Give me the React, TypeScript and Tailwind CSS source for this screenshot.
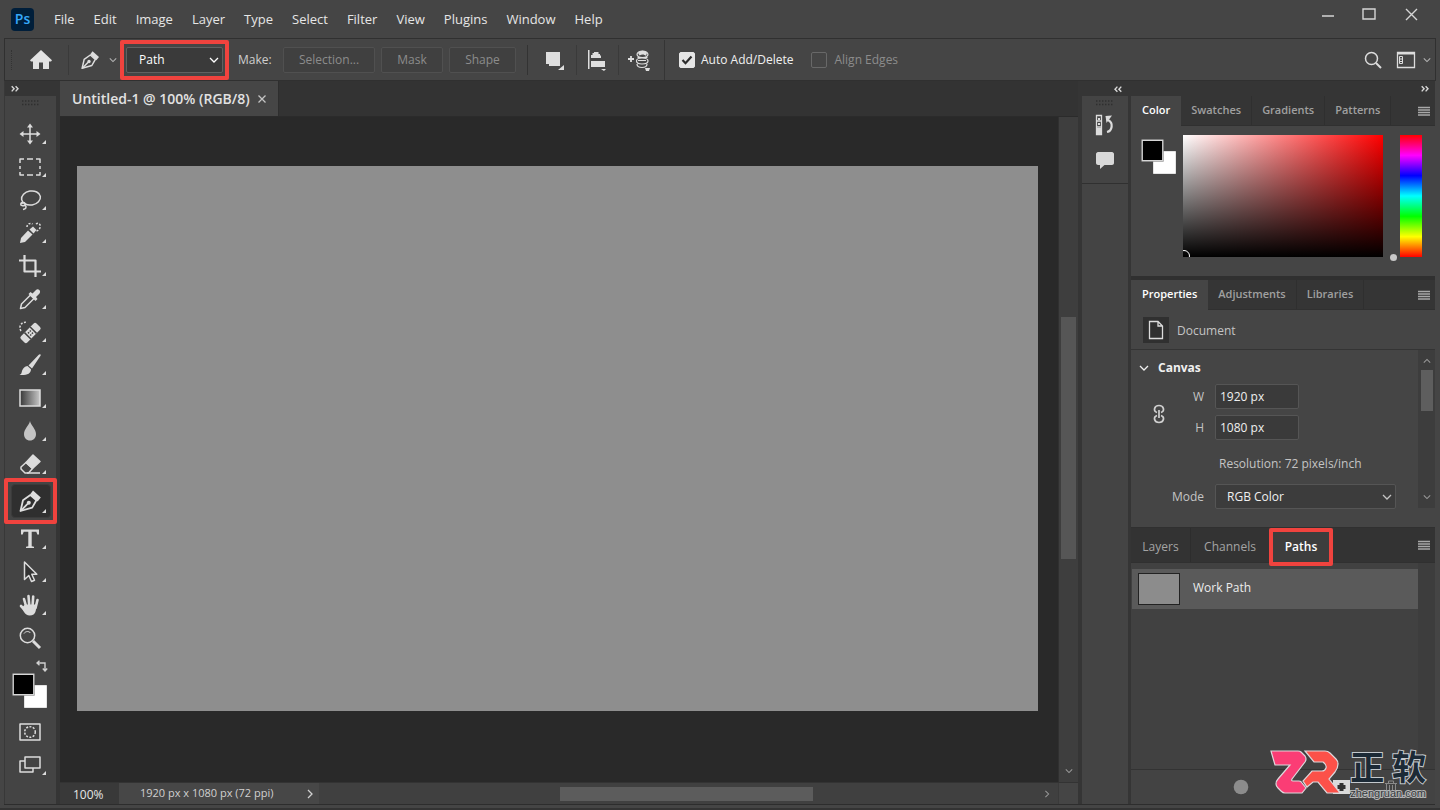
import { ReactNode } from "react";

interface ToolProps {
  name: string;
  children: ReactNode;
  corner?: boolean;
  className?: string;
}

interface TabsProps {
  tabs: string[];
  active: string;
}

const menus = [
  "File",
  "Edit",
  "Image",
  "Layer",
  "Type",
  "Select",
  "Filter",
  "View",
  "Plugins",
  "Window",
  "Help",
];

const Chevron = ({ className = "" }: { className?: string }) => (
  <svg
    className={className}
    width="10"
    height="10"
    viewBox="0 0 10 10"
    fill="none"
    stroke="currentColor"
    strokeWidth="1.3"
  >
    <path d="M1 3l4 4 4-4" />
  </svg>
);

const DoubleArrow = ({ className = "" }: { className?: string }) => (
  <svg
    className={className}
    width="8"
    height="8"
    viewBox="0 0 8 8"
    fill="none"
    stroke="#d8d8d8"
    strokeWidth="1.4"
  >
    <path d="M.7 1.2l2.4 2.6L.7 6.4M4.6 1.2L7 3.8 4.6 6.4" />
  </svg>
);

const Corner = ({ className = "right-[10px] bottom-[6px]" }: { className?: string }) => (
  <svg className={`absolute ${className}`} width="4" height="4" viewBox="0 0 4 4">
    <path d="M4 0v4H0z" fill="#dcdcdc" />
  </svg>
);

const Grip = () => (
  <svg width="18" height="6" viewBox="0 0 18 6">
    <path
      d="M0 1h18M0 4.5h18"
      stroke="#2f2f2f"
      strokeWidth="1.4"
      strokeDasharray="1.4 1.6"
    />
  </svg>
);

const Swatches = ({ className = "" }: { className?: string }) => (
  <svg className={className} width="36" height="36" viewBox="0 0 36 36">
    <path d="M12.5 12.5h22v22h-22z" fill="#fff" stroke="#e4e4e4" />
    <path d="M.5.5h22v22H.5z" fill="#2b2b2b" />
    <path d="M1.2 1.2h20.6v20.6H1.2z" fill="#000" stroke="#d6d6d6" strokeWidth="1.4" />
  </svg>
);

const PenIcon = ({ size = 24 }: { size?: number }) => (
  <svg width={size} height={size} viewBox="0 0 24 24">
    <g fill="none" stroke="#dedede" strokeWidth="1.8" strokeLinejoin="round">
      <path d="M2.5 22L5 11.2 12.4 6l6 5.2-4.2 7.4L2.5 22z" />
      <path d="M3 21.6l6.8-7" />
    </g>
    <circle cx="10.8" cy="13.8" r="2" fill="#dedede" />
    <path d="M12.4 5l2.6-3.5 7.8 6.9-3.2 4z" fill="#dedede" />
  </svg>
);

const Tool = ({ name, children, corner = true, className = "" }: ToolProps) => (
  <button
    type="button"
    aria-label={name}
    className={`relative flex h-[33px] w-full items-center justify-center pr-[2px] ${className}`}
  >
    {children}
    {corner && <Corner />}
  </button>
);

const Glyph = ({ children }: { children: ReactNode }) => (
  <svg
    width="24"
    height="24"
    viewBox="0 0 24 24"
    fill="none"
    stroke="#dcdcdc"
    strokeWidth="1.5"
    strokeLinejoin="round"
  >
    {children}
  </svg>
);

const Header = () => (
  <header className="flex h-[38px] shrink-0 items-center pr-[22px] pl-[11px]">
    <span className="flex h-[23px] w-[23px] items-center justify-center rounded bg-[#001e3a] text-sm font-semibold text-[#35a8fa]">
      Ps
    </span>
    <nav className="ml-5 flex flex-1 gap-[19px] pt-px text-[13px] text-[#e6e6e6]">
      {menus.map((menu) => (
        <button type="button" key={menu}>
          {menu}
        </button>
      ))}
    </nav>
    <div className="mb-[10px] flex items-center gap-[27px]">
      <button type="button" aria-label="Minimize">
        <svg width="12" height="14" viewBox="0 0 12 14">
          <path d="M0 9h12" stroke="#d5d5d5" strokeWidth="1.5" />
        </svg>
      </button>
      <button type="button" aria-label="Maximize">
        <svg width="16" height="14" viewBox="0 0 16 14" fill="none">
          <path d="M2 2h12v10H2z" stroke="#d5d5d5" strokeWidth="1.4" />
        </svg>
      </button>
      <button type="button" aria-label="Close">
        <svg width="14" height="14" viewBox="0 0 14 14">
          <path d="M2 2l11 11M13 2L2 13" stroke="#d5d5d5" strokeWidth="1.4" />
        </svg>
      </button>
    </div>
  </header>
);

const OptionsBar = () => {
  const makeButton =
    "h-[26px] rounded-xs border border-[#505050] bg-[#404040] text-[#8c8c8c]";
  return (
    <div className="mx-1 flex h-[43px] shrink-0 items-center border border-[#303030] text-xs">
      <span className="ml-[6px] h-5 w-px border-l border-dotted border-[#333]" />
      <button type="button" aria-label="Home" className="ml-[18px]">
        <svg width="22" height="20" viewBox="0 0 22 20" fill="#e2e2e2">
          <path d="M11 0L0 10.2l1 1.2h2V19h6v-6.500h4V19h6v-7.600h2l1-1.200z" />
        </svg>
      </button>
      <span className="mr-[11px] ml-4 h-[30px] w-px bg-[#3a3a3a]" />
      <button type="button" aria-label="Pen tool presets" className="flex items-center">
        <PenIcon size={20} />
        <Chevron className="ml-[9px] w-2 text-[#b5b5b5]" />
      </button>
      <div className="relative ml-[9px] w-[97px]">
        <select
          aria-label="Tool mode"
          className="h-[26px] w-full appearance-none rounded-xs border border-[#616161] bg-[#3a3a3a] pl-3 text-xs text-white"
        >
          <option>Path</option>
        </select>
        <Chevron className="pointer-events-none absolute top-2 right-1 text-white" />
        <span className="pointer-events-none absolute -inset-x-[6px] -inset-y-[7px] rounded-xs border-4 border-[#f0433e]" />
      </div>
      <span className="ml-[15px] w-[33px] text-[#cfcfcf]">Make:</span>
      <button type="button" className={`${makeButton} ml-3 w-[92px]`}>
        Selection...
      </button>
      <button type="button" className={`${makeButton} ml-[6px] w-[62px]`}>
        Mask
      </button>
      <button type="button" className={`${makeButton} ml-[6px] w-[67px]`}>
        Shape
      </button>
      <span className="ml-[11px] h-[30px] w-px bg-[#333]" />
      <button type="button" aria-label="Path operations" className="ml-[17px]">
        <svg width="20" height="22" viewBox="0 0 20 22" fill="#dedede">
          <path d="M1 3h14v14H4v-2H1z" />
          <path d="M19 16v5h-6z" />
        </svg>
      </button>
      <span className="ml-[11px] h-[30px] w-px bg-[#3a3a3a]" />
      <button type="button" aria-label="Path alignment" className="ml-[11px]">
        <svg width="20" height="22" viewBox="0 0 20 22" fill="#dedede">
          <path d="M0 1h1.500v19H0zM3 9V6h1.500V4H6V3h4.500v2H12v1.500h1V9zM3 12h14v6H3zM13 20h5l-2 2z" />
        </svg>
      </button>
      <span className="ml-[10px] h-[30px] w-px bg-[#3a3a3a]" />
      <button type="button" aria-label="Path arrangement" className="ml-[9px]">
        <svg width="23" height="22" viewBox="0 0 23 22">
          <path d="M0 10h6M3 7v6" stroke="#dedede" strokeWidth="1.800" />
          <path d="M10 4c2-3 7-3 9 0l-1 3c-2-2-4-2-6.500-.500z" fill="#dedede" />
          <path
            d="M9 5c0 2 2 3.500 5.500 3.500S20 7 20 5M20 5c-2-4-9-4-11 0M9.500 8.500h10M8.500 12c0-2 2-3 5.500-3s6 1 6 3-2 3-6 3-5.500-1-5.500-3zM10 11.500h8M9 15c0 2 2 3.500 5 3.500s5-1.500 5-3.500"
            fill="none"
            stroke="#dedede"
            strokeWidth="1.200"
          />
          <path d="M17 19h5l-1 3h-3z" fill="#dedede" />
        </svg>
      </button>
      <span className="mr-[14px] ml-[13px] h-10 w-px bg-[#353535]" />
      <label className="relative flex items-center gap-[6px] text-[#f0f0f0]">
        <input
          type="checkbox"
          defaultChecked
          className="h-4 w-4 appearance-none rounded-xs border border-[#e6e6e6] checked:bg-[#e6e6e6]"
        />
        <svg className="absolute left-0" width="16" height="16" viewBox="0 0 16 16" fill="none">
          <path d="M3.500 8l3 3.200L12.500 4.500" stroke="#2d2d2d" strokeWidth="2.200" />
        </svg>
        Auto Add/Delete
      </label>
      <label className="ml-[18px] flex items-center gap-[7px] text-[#8c8c8c]">
        <input
          type="checkbox"
          className="h-4 w-4 appearance-none rounded-xs border border-[#686868]"
        />
        Align Edges
      </label>
      <div className="ml-auto flex items-center pr-1">
        <button type="button" aria-label="Search">
          <svg width="18" height="18" viewBox="0 0 18 18" fill="none" stroke="#dcdcdc">
            <circle cx="7.500" cy="7.500" r="6" strokeWidth="1.500" />
            <path d="M12 12l5 5" strokeWidth="2" />
          </svg>
        </button>
        <button type="button" aria-label="Workspaces" className="ml-[14px] flex items-center">
          <svg width="20" height="18" viewBox="0 0 20 18" fill="none" stroke="#dcdcdc">
            <path d="M1.500 1.500h17v15h-17z" strokeWidth="1.300" />
            <path d="M1.500 2.500h17" strokeWidth="2" />
            <path d="M3.500 5.500h3v7h-3zM3.500 8h3M3.500 10.500h3" />
          </svg>
          <Chevron className="ml-[7px] w-2 text-[#b5b5b5]" />
        </button>
      </div>
    </div>
  );
};

const Toolbar = () => (
  <aside className="flex w-[52px] shrink-0 flex-col border-l border-[#383838] bg-[#444]">
    <div className="flex h-[15px] items-center bg-[#353535] pl-[6px]">
      <DoubleArrow />
    </div>
    <div className="flex h-[21px] items-start justify-center pt-1">
      <Grip />
    </div>
    <Tool name="Move">
      <Glyph>
        <path d="M12 3v18M3 12h18" />
        <path
          d="M12 1.500l3 4H9zM12 22.500l3-4H9zM1.500 12l4-3v6zM22.500 12l-4-3v6z"
          fill="#dcdcdc"
          stroke="none"
        />
      </Glyph>
    </Tool>
    <Tool name="Rectangular marquee">
      <Glyph>
        <path d="M2 8V4h4M9 4h6M18 4h4v4M22 11v3M22 17v3h-4M15 20H9M6 20H2v-3M2 14v-3" />
      </Glyph>
    </Tool>
    <Tool name="Lasso">
      <Glyph>
        <ellipse cx="13" cy="10" rx="9.500" ry="7" transform="rotate(-10 13 10)" />
        <path d="M4.500 14.500c-2 0-2.500 2.500-.500 3s4-.500 3-2-3-1-3 .500M7 17c2 2 1 4-2 4.500" />
      </Glyph>
    </Tool>
    <Tool name="Quick selection">
      <Glyph>
        <path d="M2 22l1-5 7-7.500 4.500 4L7 21z" fill="#dcdcdc" stroke="none" />
        <path d="M11.500 8.500l4 4 3-3.500-3.500-3.500z" fill="#dcdcdc" stroke="none" />
        <path d="M9 6c0-3 3-4.500 5.500-3M18 3c3-2 5 1 4 3.500-.500 2-2 3-3.500 3.500" strokeDasharray="2 1.500" />
      </Glyph>
    </Tool>
    <Tool name="Crop">
      <Glyph>
        <path d="M6.500 1v16.500H23M1 6.500h16.500V23" strokeWidth="2.200" />
      </Glyph>
    </Tool>
    <Tool name="Eyedropper">
      <Glyph>
        <path d="M2.500 21.500l1-4.500 9-9 3.500 3.500-9 9z" />
        <path
          d="M10.500 7l2-2 2 1.500L18 3c2-2 5.500 1 3.500 3.500L18 10l1.500 2-2 2z"
          fill="#dcdcdc"
          stroke="none"
        />
      </Glyph>
    </Tool>
    <Tool name="Spot healing brush">
      <Glyph>
        <path d="M3 11C0 6 4 1 9.500 2.500" strokeDasharray="2 1.500" />
        <g transform="rotate(-45 12.500 13)">
          <rect x="1.500" y="8.500" width="22" height="9" rx="2" fill="#dcdcdc" stroke="none" />
          <path d="M8.500 8.500v9M16.500 8.500v9" stroke="#444" />
          <path d="M10.500 11.500h4M10.500 14.500h4" stroke="#444" strokeDasharray="1.500 1" />
        </g>
      </Glyph>
    </Tool>
    <Tool name="Brush">
      <Glyph>
        <path
          d="M22.500 1.500c.5.500 0 1.500-.5 2L14 15.500l-3.500-3L20.500 2c.5-.500 1.500-1 2-.500zM9.500 13l3.500 3.200c0 4.300-4 6.300-11.500 5.800 2-1 2-2 2.500-4s3-5 5.500-5z"
          fill="#dcdcdc"
          stroke="none"
        />
      </Glyph>
    </Tool>
    <Tool name="Gradient">
      <svg width="24" height="24" viewBox="0 0 24 24">
        <defs>
          <linearGradient id="ramp">
            <stop offset="0" stopColor="#383838" />
            <stop offset="1" stopColor="#c8c8c8" />
          </linearGradient>
        </defs>
        <path d="M2 4h20v16H2z" fill="url(#ramp)" stroke="#dcdcdc" strokeWidth="1.500" />
      </svg>
    </Tool>
    <Tool name="Blur">
      <Glyph>
        <path
          d="M12 2c1 4.500 6 8 6 13 0 4-2.500 6.500-6 6.500S6 19 6 15c0-5 5-8.500 6-13z"
          fill="#c4c4c4"
          stroke="none"
        />
      </Glyph>
    </Tool>
    <Tool name="Eraser">
      <Glyph>
        <path d="M3 15l5-4.500 6.500 6-4 4.500H7l-4-4z" />
        <path d="M8 10.500L15 3l7 6.500-7.500 7z" fill="#dcdcdc" />
        <path d="M9 21h13" />
      </Glyph>
    </Tool>
    <div className="relative flex h-[42px] items-center justify-center">
      <button
        type="button"
        aria-label="Pen"
        className="relative flex h-[34px] w-10 items-center justify-center rounded border border-[#3b3b3b] bg-[#2f2f2f] pr-[2px]"
      >
        <PenIcon />
        <Corner className="right-1 bottom-1" />
      </button>
      <span className="pointer-events-none absolute -inset-y-[2px] -right-px -left-px rounded-xs border-4 border-[#f0433e]" />
    </div>
    <Tool name="Type">
      <Glyph>
        <path
          d="M3 2.500h18v5h-1.700l-1-2.800h-4.600v14.500l2.300.500v1.300H8v-1.300l2.300-.500V4.700H5.700l-1 2.800H3z"
          fill="#dcdcdc"
          stroke="none"
        />
      </Glyph>
    </Tool>
    <Tool name="Path selection">
      <Glyph>
        <path d="M6.500 2v17.500l4.300-4 2.700 6 3-1.300-2.700-6h5z" fill="#333" />
      </Glyph>
    </Tool>
    <Tool name="Hand">
      <Glyph>
        <g stroke="#dcdcdc" strokeLinecap="round" strokeWidth="2.600">
          <path d="M6 6l2.300 8M10.500 3l.8 10M15.200 3.500l-.7 10M19.500 7l-2 8M3 13l4.500 4.500" />
        </g>
        <path
          d="M7 11.500h11.700l-1 6.500c-.7 3-3 4.500-6 4.500-2.700 0-4.200-1.500-5.700-3.500L3.500 15z"
          fill="#dcdcdc"
          stroke="none"
        />
      </Glyph>
    </Tool>
    <Tool name="Zoom" corner={false}>
      <Glyph>
        <circle cx="9.500" cy="9.500" r="7.200" />
        <path d="M15 15l7 7" strokeWidth="3" />
        <path d="M6 7.500C7.500 5 11 5 12.500 7" strokeWidth="1" />
      </Glyph>
    </Tool>
    <button type="button" aria-label="Switch colors" className="mt-[6px] ml-[31px] h-3 w-3">
      <svg width="12" height="12" viewBox="0 0 12 12" fill="none" stroke="#d0d0d0" strokeWidth="1.400">
        <path d="M3.500.8L1 3l2.500 2.200M1 3h8v7.500M6.800 8.500L9 11l2.200-2.500" />
      </svg>
    </button>
    <Swatches className="mt-px ml-[7px]" />
    <Tool name="Quick mask" corner={false} className="mt-[6px]">
      <Glyph>
        <path d="M2 4h20v16H2z" />
        <circle cx="12" cy="12" r="5.300" strokeDasharray="2 1.400" />
      </Glyph>
    </Tool>
    <Tool name="Screen mode">
      <Glyph>
        <path d="M7 4h15v11H7zM7 8H2v11h13v-4" />
      </Glyph>
    </Tool>
  </aside>
);

const Workspace = () => (
  <main className="ml-1 flex min-w-0 flex-1 flex-col bg-[#333]">
    <div className="flex h-9 shrink-0 border-b border-[#2b2b2b]">
      <div className="flex items-center border-r border-[#2e2e2e] bg-[#464646] px-3 text-sm font-semibold text-[#e2e2e2]">
        Untitled-1 @ 100% (RGB/8)
        <button type="button" aria-label="Close document" className="ml-2">
          <svg width="8" height="8" viewBox="0 0 8 8" stroke="#c4c4c4" strokeWidth="1.300">
            <path d="M.5.5l7 7M7.500.5l-7 7" />
          </svg>
        </button>
      </div>
    </div>
    <div className="flex min-h-0 flex-1">
      <div className="flex flex-1 bg-[#292929] pt-[49px] pr-5 pb-[71px] pl-[17px]">
        <div className="flex-1 bg-[#8e8e8e]" />
      </div>
      <div className="flex w-[20px] flex-col items-center border-l border-[#303030] bg-[#3e3e3e]">
        <div className="h-[30%]" />
        <div className="h-[36.5%] w-[15px] bg-[#565656]" />
        <Chevron className="mt-auto mb-[6px] w-2 text-[#999]" />
      </div>
    </div>
    <div className="flex h-[22px] shrink-0 items-center border-t border-[#333] bg-[#404040] text-[#d0d0d0]">
      <span className="flex h-full w-[59px] items-center bg-[#393939] pt-[2px] pl-[13px] text-xs text-[#e6e6e6]">
        100%
      </span>
      <span className="flex h-full w-[200px] items-center bg-[#474747] pl-[21px] text-[11px]">
        1920 px x 1080 px (72 ppi)
        <Chevron className="mr-1 ml-auto -rotate-90" />
      </span>
      <div className="flex flex-1 items-center">
        <div className="w-1/3" />
        <div className="h-[14px] w-[253px] bg-[#5c5c5c]" />
      </div>
      <Chevron className="mr-[7px] w-2 -rotate-90 text-[#999]" />
      <span className="h-full w-[20px] border-l border-[#3a3a3a] bg-[#454545]" />
    </div>
  </main>
);

const IconDock = () => (
  <div className="ml-1 w-[46px] shrink-0 bg-[#444]">
    <div className="flex h-[15px] items-center justify-end bg-[#353535] pr-[6px]">
      <DoubleArrow className="rotate-180" />
    </div>
    <div className="flex h-[88px] flex-col items-center border-b border-[#303030] pt-1">
      <Grip />
      <button type="button" aria-label="History" className="mt-2">
        <svg width="20" height="22" viewBox="0 0 20 22">
          <path d="M1.500 1.500h5v19h-5zM2 7h4M2 13h4" fill="none" stroke="#dcdcdc" strokeWidth="1.300" />
          <path d="M2 14h4v6H2zM3 4h2v2H3zM3 9h2v2H3z" fill="#dcdcdc" />
          <path d="M12 18c5-1 7-9 1-12" fill="none" stroke="#dcdcdc" strokeWidth="2.200" />
          <path d="M17 1.500l-6.500.500 1 7z" fill="#dcdcdc" />
        </svg>
      </button>
      <button type="button" aria-label="Comments" className="mt-[14px]">
        <svg width="20" height="20" viewBox="0 0 20 20" fill="#d8d8d8">
          <path d="M3 2h14c1 0 2 1 2 2v9c0 1-1 2-2 2H9.500L5 19v-4H3c-1 0-2-1-2-2V4c0-1 1-2 2-2z" />
        </svg>
      </button>
    </div>
  </div>
);

const PanelMenu = () => (
  <button type="button" aria-label="Panel menu" className="mr-[5px] ml-auto">
    <svg width="12" height="10" viewBox="0 0 12 10" stroke="#a8a8a8">
      <path d="M0 1.500h12M0 4h12M0 6.500h12M0 9h12" strokeWidth="1.600" />
    </svg>
  </button>
);

const PanelTabs = ({ tabs, active }: TabsProps) => (
  <div className="flex h-[30px] shrink-0 items-stretch border-b border-[#303030] bg-[#353535] text-[11px] font-semibold text-[#a0a0a0]">
    {tabs.map((tab) => (
      <button
        type="button"
        key={tab}
        className={
          tab === active
            ? "-mb-px bg-[#454545] px-[11px] pb-px text-white"
            : "border-r border-[#2f2f2f] px-[10px]"
        }
      >
        {tab}
      </button>
    ))}
    <PanelMenu />
  </div>
);

const ColorPanel = () => (
  <section className="flex h-[180px] flex-col bg-[#454545]">
    <PanelTabs tabs={["Color", "Swatches", "Gradients", "Patterns"]} active="Color" />
    <div className="flex flex-1 pt-[9px] pr-[13px]">
      <Swatches className="mt-1 ml-[10px] shrink-0" />
      <div className="relative ml-[6px] h-[122px] flex-1 overflow-hidden bg-linear-to-r/srgb from-white to-[#f00]">
        <div className="h-full bg-linear-to-t/srgb from-black to-transparent" />
        <span className="absolute -bottom-[5px] -left-[5px] h-3 w-3 rounded-full border border-white" />
      </div>
      <span className="mt-[119px] mr-[3px] ml-[7px] h-[7px] w-[7px] rounded-full bg-[#c8c8c8]" />
      <div className="h-[122px] w-[22px] bg-[linear-gradient(#f00,#f0f,#00f,#0ff,#0f0,#ff0,#f00)]" />
    </div>
  </section>
);

const PropertiesPanel = () => {
  const field =
    "h-[25px] w-[84px] rounded-xs border border-[#555] bg-[#3a3a3a] px-1 text-xs text-[#f0f0f0]";
  return (
    <section className="mt-1 flex h-[247px] flex-col bg-[#454545] text-xs text-[#c4c4c4]">
      <PanelTabs tabs={["Properties", "Adjustments", "Libraries"]} active="Properties" />
      <div className="flex h-10 shrink-0 items-center gap-2 border-b border-[#343434] pl-3">
        <span className="flex h-[26px] w-[26px] items-center justify-center bg-[#303030]">
          <svg width="16" height="20" viewBox="0 0 16 20" fill="none" stroke="#dcdcdc" strokeWidth="1.300">
            <path d="M1.500 1.500h8.500l4.500 4.500v12.500h-13zM10 1.500V6h4.500" />
          </svg>
        </span>
        <span className="pt-[2px]">Document</span>
      </div>
      <div className="flex h-[158px]">
        <div className="flex-1 pt-2">
          <h2 className="flex h-5 items-center gap-[9px] pl-2 font-bold text-[#f0f0f0]">
            <Chevron />
            Canvas
          </h2>
          <div className="mt-[6px] flex items-center">
            <svg className="mt-1 ml-[22px]" width="12" height="20" viewBox="0 0 12 20" fill="none" stroke="#d0d0d0" strokeWidth="1.700">
              <path d="M4 8.500C0 7 1 1.500 6 1.500S12 7 8 8.500M4 11.500c-4 1.500-3 7 2 7s6-5.500 2-7M6 6v8" />
            </svg>
            <div className="ml-[9px] flex flex-col gap-[6px]">
              <label className="flex items-center">
                <span className="mr-[11px] w-[30px] text-right">W</span>
                <input className={field} defaultValue="1920 px" />
              </label>
              <label className="flex items-center">
                <span className="mr-[11px] w-[30px] text-right">H</span>
                <input className={field} defaultValue="1080 px" />
              </label>
            </div>
          </div>
          <p className="mt-4 ml-[88px] h-5">Resolution: 72 pixels/inch</p>
          <label className="mt-2 mr-[22px] flex items-center">
            <span className="mr-[11px] w-[73px] text-right">Mode</span>
            <span className="relative flex-1">
              <select className="h-[25px] w-full appearance-none rounded-xs border border-[#555] bg-[#3c3c3c] pl-[11px] text-xs text-[#f0f0f0]">
                <option>RGB Color</option>
              </select>
              <Chevron className="pointer-events-none absolute top-2 right-1" />
            </span>
          </label>
        </div>
        <div className="flex w-[17px] flex-col items-center bg-[#3d3d3d] py-[6px]">
          <Chevron className="w-2 rotate-180 text-[#999]" />
          <div className="mt-1 h-[41px] w-3 bg-[#5e5e5e]" />
          <Chevron className="mt-auto w-2 text-[#999]" />
        </div>
      </div>
    </section>
  );
};

const PathsPanel = () => (
  <section className="mt-px flex min-h-0 flex-1 flex-col bg-[#414141]">
    <div className="flex h-[35px] shrink-0 items-stretch border-b border-[#303030] bg-[#333] text-xs font-medium text-[#a4a4a4]">
      <button type="button" className="w-[60px] border-r border-[#2d2d2d] pt-[3px]">
        Layers
      </button>
      <button type="button" className="w-[78px] pt-[3px]">
        Channels
      </button>
      <button
        type="button"
        className="relative w-[64px] bg-[#3d3d3d] pt-[3px] font-semibold text-white"
      >
        Paths
        <span className="absolute inset-x-0 top-0 -bottom-[4px] z-10 rounded-xs border-4 border-[#f0433e]" />
      </button>
      <PanelMenu />
    </div>
    <div className="flex flex-1">
      <ul className="mt-[6px] ml-px flex-1">
        <li className="flex h-10 items-center bg-[#5a5a5a] pl-[6px] text-xs text-[#ececec]">
          <span className="mr-[13px] h-8 w-[42px] border border-[#222] bg-[#8c8c8c]" />
          <span className="pb-[2px]">Work Path</span>
        </li>
      </ul>
      <div className="w-[17px] bg-[#3d3d3d]" />
    </div>
    <div className="flex h-[35px] items-center border-t border-[#333] bg-[#434343] pr-[38px]">
      <button type="button" aria-label="Fill path" className="ml-auto">
        <svg width="16" height="16" viewBox="0 0 16 16">
          <circle cx="8" cy="8" r="7.300" fill="#8c8c8c" />
        </svg>
      </button>
      <button type="button" aria-label="Add mask" className="ml-[84px]">
        <svg width="17" height="16" viewBox="0 0 17 16">
          <path d="M0 1h17v14H0z" fill="#dadada" />
          <path d="M8.500 4v8M4.500 8h8" stroke="#333" strokeWidth="4" />
        </svg>
      </button>
      <button type="button" aria-label="Delete path" className="ml-[35px]">
        <svg width="12" height="14" viewBox="0 0 12 14" fill="none" stroke="#8a8a8a">
          <path d="M0 3.500h12M3.500 3V1h5v2M1.500 4v9h9V4M4.500 5v7M7.500 5v7" />
        </svg>
      </button>
    </div>
  </section>
);

const Watermark = () => (
  <div className="pointer-events-none absolute right-[14px] bottom-[10px] flex items-end">
    <svg width="84" height="56" viewBox="2 0 84 56" stroke="#ded8dc" strokeWidth="1.200">
      <path
        d="M7 7h27q2 0 3 1l4 4q2 3 0 6L28 35q-1 2 1 2h6q2 0 3 2l4 5-4 5H21q-2 0-4-2l-3-3q-2-2-2-4 0-3 2-5l12-14H11z"
        fill="#fb3d75"
      />
      <path
        d="M41 7h20q3 0 5 2l6 6q2 2 2 5 0 4-3 8l-6 7 11 14H63l-9-11h-5l-6 5-4-6 9-10h10q3 0 4-3t-3-6H50z"
        fill="#fc5149"
      />
    </svg>
    <div>
      <div className="flex justify-between font-['Noto_Sans_CJK_SC',sans-serif] text-[34px] leading-10 font-bold text-[#1c2a36] [-webkit-text-stroke:2px_#c3c8cc] [paint-order:stroke_fill]">
        <span>正</span>
        <span>软</span>
      </div>
      <div className="font-['Liberation_Sans',sans-serif] text-[11px] leading-[14px] text-[#34383c] [-webkit-text-stroke:2px_#b5b5b5] [paint-order:stroke_fill]">
        zhengruan.com
      </div>
    </div>
  </div>
);

const App = () => {
  return (
    <div className="relative flex h-screen flex-col overflow-hidden bg-[#454545] font-['Open_Sans','Noto_Sans',sans-serif]">
      <Header />
      <OptionsBar />
      <div className="mr-[5px] ml-1 flex min-h-0 flex-1 border-b border-[#2d2d2d] bg-[#353535]">
        <Toolbar />
        <Workspace />
        <IconDock />
        <div className="ml-[3px] flex w-[304px] shrink-0 flex-col bg-[#303030]">
          <div className="flex h-[15px] shrink-0 items-center justify-end bg-[#353535] pr-[6px]">
            <DoubleArrow />
          </div>
          <ColorPanel />
          <PropertiesPanel />
          <PathsPanel />
        </div>
      </div>
      <footer className="h-[5px] shrink-0 border-b-2 border-[#333]" />
      <Watermark />
    </div>
  );
};

export default App;
